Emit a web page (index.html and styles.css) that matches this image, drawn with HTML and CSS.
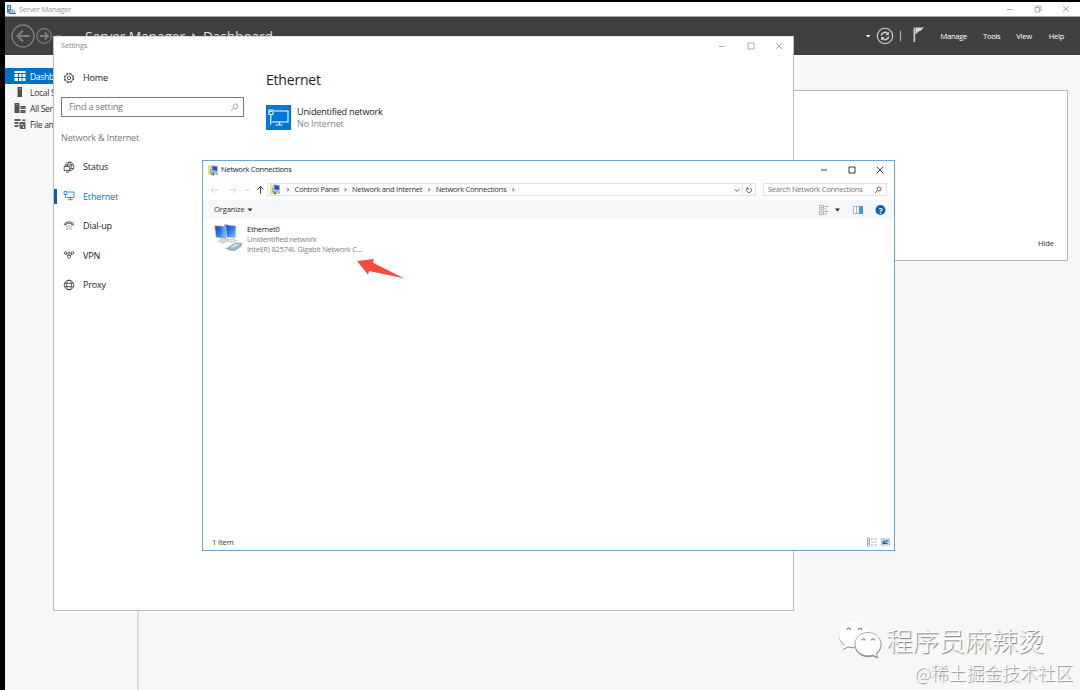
FILE: index.html
```html
<!DOCTYPE html>
<html lang="en">
<head>
    <meta charset="UTF-8">
    <meta name="viewport" content="width=device-width, initial-scale=1.0">
    <title>Server Manager</title>
    <link rel="stylesheet" href="styles.css">
</head>
<body>
    <div class="desktop">

        <!-- Server Manager -->
        <div class="server">
            <div class="server-title">
                <svg class="server-logo" viewBox="0 0 10 10">
                    <path fill="#2f86c5" d="M1 0h4v8H1z"/>
                    <path fill="#fff" d="M2 1.500h2v.7H2zM2 3h2v.7H2z"/>
                    <path fill="#7fa9c8" d="M3 5h2v3H3zM5.500 4H7v4H5.500zM7.500 5.500H9V8H7.500z"/>
                    <path fill="#2f6f9f" d="M3 8h7v1H3z"/>
                </svg>
                <span>Server Manager</span>
                <div class="win-buttons server-buttons">
                    <svg viewBox="0 0 8 8"><path d="M1 4.500h6"/></svg>
                    <svg viewBox="0 0 8 8"><path d="M1 2.500h4.500V7H1zM2.500 2.500V1H7v4.500H5.500"/></svg>
                    <svg viewBox="0 0 8 8"><path d="M1 1l6 6M7 1L1 7"/></svg>
                </div>
            </div>

            <div class="server-header">
                <svg class="nav-arrows" viewBox="0 0 52 24">
                    <g fill="none" stroke="#7c7c7c">
                        <circle cx="12" cy="12" r="11" stroke-width="1.300"/>
                        <path stroke-width="2.200" d="M18.500 12H6.500M12 6.500L6.500 12l5.500 5.500"/>
                        <circle cx="33" cy="12" r="7.300" stroke-width="1.200"/>
                        <path stroke-width="1.800" d="M29 12h8M33.700 8.500l3.500 3.500-3.500 3.500"/>
                    </g>
                    <path fill="#777" d="M45 11h5l-2.500 3z"/>
                </svg>
                <div class="breadcrumb">
                    <span>Server Manager</span>
                    <svg viewBox="0 0 5 8"><path fill="#ddd" d="M.5 0L4.500 4l-4 4z"/></svg>
                    <span>Dashboard</span>
                </div>
                <div class="server-menu">
                    <svg class="header-icons" viewBox="0 0 60 20">
                        <path fill="#fff" d="M0 9h4.400L2.200 11.600z"/>
                        <g fill="none" stroke="#cfcfcf">
                            <circle cx="19" cy="10" r="7.700" stroke-width="1.100"/>
                            <path stroke-width="1.500" d="M15.300 9.500a3.800 3.800 0 0 1 6.700-1.700M22.700 10.500a3.800 3.800 0 0 1-6.700 1.700"/>
                            <path stroke-width="1.200" d="M34.500 4.500v11" stroke="#aaa"/>
                        </g>
                        <path fill="#cfcfcf" d="M22.900 5.500v3.600h-3.600zM15.100 14.500v-3.600h3.600z"/>
                        <path fill="#c6c6c6" d="M47.500 1.500h1.700v14.500h-1.700z"/>
                        <path fill="#dadada" d="M49.500 1.500h8.500l-3.500 3.300-2 .7-3 3z"/>
                    </svg>
                    <span class="m-manage">Manage</span>
                    <span class="m-tools">Tools</span>
                    <span class="m-view">View</span>
                    <span class="m-help">Help</span>
                </div>
            </div>

            <div class="server-body">
                <div class="server-side">
                    <div class="side-item active">
                        <svg viewBox="0 0 12 12"><path fill="#fff" d="M.5 1h11v2H.5zM.5 4H4v3H.5zM5 4h2.500v3H5zM8.500 4h3v3h-3zM.5 8H4v3H.5zM5 8h2.500v3H5zM8.500 8h3v3h-3z"/></svg>
                        <span>Dashboard</span>
                    </div>
                    <div class="side-item">
                        <svg viewBox="0 0 12 12"><path fill="#505050" d="M3.500 1h4.500v10H3.500z"/><path fill="#aaa" d="M4.500 2.500h2.500v.8H4.500z"/></svg>
                        <span>Local Server</span>
                    </div>
                    <div class="side-item">
                        <svg viewBox="0 0 12 12"><path fill="#505050" d="M.5 1H5.500v10h-5zM6.500 4h5v3h-5zM6.500 8h5v3h-5z"/><path fill="#aaa" d="M1.500 2.500h3v.7h-3zM7.500 5h3v.6h-3zM7.500 9h3v.6h-3z"/></svg>
                        <span>All Servers</span>
                    </div>
                    <div class="side-item">
                        <svg viewBox="0 0 12 12"><path fill="#606060" d="M.5 1h6v2h-6zM.5 4h4v2h-4zM.5 7h4v2h-4zM5.500 4h6v7H6V9.500h-.5zM8 1.500h3.500V3H8z"/><path fill="#ddd" d="M7 6h2v1H7zM9 8h1v2H9z"/></svg>
                        <span>File and Storage</span>
                    </div>
                </div>
                <div class="server-main">
                    <div class="server-tile"><span>Hide</span></div>
                </div>
            </div>
        </div>

        <!-- Settings -->
        <div class="settings">
            <div class="settings-title">
                <span>Settings</span>
                <div class="win-buttons settings-buttons">
                    <svg viewBox="0 0 8 8"><path d="M1 4.500h6"/></svg>
                    <svg viewBox="0 0 8 8"><path d="M1 1h6v6H1z"/></svg>
                    <svg viewBox="0 0 8 8"><path d="M1 1l6 6M7 1L1 7"/></svg>
                </div>
            </div>
            <div class="settings-body">
                <div class="settings-nav">
                    <div class="nav-item home">
                        <svg viewBox="0 0 12 12"><circle cx="6" cy="6" r="4.700" stroke-width="1" stroke-dasharray="2.200 1.490"/><circle cx="6" cy="6" r="4" stroke-width=".6"/><circle cx="6" cy="6" r="1.700" stroke-width=".8"/></svg>
                        <span>Home</span>
                    </div>
                    <div class="search">
                        <span>Find a setting</span>
                        <svg viewBox="0 0 10 10"><circle cx="6" cy="3.700" r="2.700"/><path d="M4 5.700L1 9"/></svg>
                    </div>
                    <div class="nav-heading">Network &amp; Internet</div>
                    <div class="nav-item">
                        <svg viewBox="0 0 12 12"><circle cx="6.500" cy="5.500" r="4.400"/><path d="M2.500 4h8M6.500 1c-2 2-2 3-2 4M6.500 1c3 3 2 6 0 8.500M8 7.500h3"/><path fill="#fff" d="M1.200 5.500h5.500v4H1.200zM3 11.200h3"/></svg>
                        <span>Status</span>
                    </div>
                    <div class="nav-item active">
                        <svg viewBox="0 0 12 12"><path d="M5 2h6v5.500H3.500M7.500 7.500v2.200M5 9.700h5M1 1.500h3v2.800H1zM2.500 4.300v3.700"/></svg>
                        <span>Ethernet</span>
                    </div>
                    <div class="nav-item">
                        <svg viewBox="0 0 12 12"><path stroke-width=".8" d="M1.200 4.700C1.500 1 10.500 1 10.800 4.700L8.800 5V3.800c-1.700-.7-3.900-.7-5.600 0V5z"/><path stroke-dasharray="1 .7" stroke-width=".7" d="M4 6v4M6 5v5M8 6v4"/></svg>
                        <span>Dial-up</span>
                    </div>
                    <div class="nav-item">
                        <svg viewBox="0 0 12 12"><circle cx="2.500" cy="4" r="1.300"/><circle cx="6" cy="4.300" r="1"/><circle cx="9.500" cy="4" r="1.300"/><circle cx="6" cy="7.600" r="1.500"/><path d="M3 5.200l2 1.500M9 5.200L7 6.700"/></svg>
                        <span>VPN</span>
                    </div>
                    <div class="nav-item">
                        <svg viewBox="0 0 12 12"><circle cx="6" cy="6" r="4.800"/><ellipse cx="6" cy="6" rx="2.300" ry="4.800"/><path d="M1.700 4.300h8.600M1.700 7.700h8.600"/></svg>
                        <span>Proxy</span>
                    </div>
                </div>
                <div class="settings-main">
                    <h1>Ethernet</h1>
                    <div class="network">
                        <svg viewBox="0 0 25 25">
                            <path fill="#0078d7" d="M0 0h25v25H0z"/>
                            <path fill="none" stroke="#fff" stroke-width="1.100" d="M8 6h14v11H6M13.500 17v2.500M9.500 20h7M3 5h4v4.500H3zM4.800 9.500v10"/>
                            <path fill="#fff" d="M3.500 6h2.500v1H3.500z"/>
                        </svg>
                        <div>
                            <div class="network-name">Unidentified network</div>
                            <div class="network-state">No Internet</div>
                        </div>
                    </div>
                </div>
            </div>
        </div>

        <!-- Network Connections -->
        <div class="explorer">
            <div class="explorer-title">
                <svg class="net-icon" viewBox="0 0 11 11">
                    <path fill="#f0dc84" d="M0 .500h5v9.500H0z"/>
                    <path fill="#9ac6e6" stroke="#5f93bd" stroke-width=".6" d="M2.500 4.500h4v3.500h-4z"/>
                    <path fill="#2c52bb" stroke="#a9bcdb" stroke-width=".8" d="M4 .8l5.500.5V6.500L4 5.500z"/>
                    <path fill="#a4b2bd" d="M6 7l3-.5L10.500 9l-2 1.200z"/>
                    <path fill="#3f9b50" d="M3 9l2.500-1.500L7 9.500l-2 1.300z"/>
                </svg>
                <span>Network Connections</span>
                <div class="win-buttons explorer-buttons">
                    <svg viewBox="0 0 8 8"><path d="M1 4h6"/></svg>
                    <svg viewBox="0 0 8 8"><path d="M1 1h6v6H1z"/></svg>
                    <svg viewBox="0 0 8 8"><path d="M.7.700l6.600 6.600M7.300.7L.7 7.300"/></svg>
                </div>
            </div>

            <div class="address-row">
                <svg class="arrows" viewBox="0 0 56 10">
                    <g fill="none" stroke="#d2d2d2">
                        <path d="M8 5H1.500M4 2L1 5l3 3M19 5h6.500M23 2l3 3-3 3M35 4l2 2 2-2"/>
                        <path stroke="#444" d="M50.500 8.500v-7M47.500 4.500l3-3 3 3"/>
                    </g>
                </svg>
                <div class="address">
                    <svg class="net-icon" viewBox="0 0 11 11">
                        <path fill="#f0dc84" d="M0 .500h5v9.500H0z"/>
                        <path fill="#9ac6e6" stroke="#5f93bd" stroke-width=".6" d="M2.500 4.500h4v3.500h-4z"/>
                        <path fill="#2c52bb" stroke="#a9bcdb" stroke-width=".8" d="M4 .8l5.500.5V6.500L4 5.500z"/>
                        <path fill="#a4b2bd" d="M6 7l3-.5L10.500 9l-2 1.200z"/>
                        <path fill="#3f9b50" d="M3 9l2.500-1.500L7 9.500l-2 1.300z"/>
                    </svg>
                    <i>&#8250;</i>
                    <span>Control Panel</span>
                    <i>&#8250;</i>
                    <span>Network and Internet</span>
                    <i>&#8250;</i>
                    <span>Network Connections</span>
                    <i>&#8250;</i>
                    <svg class="chevron" viewBox="0 0 8 8"><path fill="none" stroke="#666" stroke-width="1" d="M1.500 3L4 5.500 6.500 3"/></svg>
                    <div class="refresh">
                        <svg viewBox="0 0 8 8"><path fill="none" stroke="#555" stroke-width=".9" d="M5.500 2A2.500 2.500 0 1 1 2.500 2M2.200.8v2h2"/></svg>
                    </div>
                </div>
                <div class="search-box">
                    <span>Search Network Connections</span>
                    <svg viewBox="0 0 8 8"><g fill="none" stroke="#555" stroke-width=".9"><circle cx="5" cy="3" r="2"/><path d="M3.500 4.500L1 7"/></g></svg>
                </div>
            </div>

            <div class="command-bar">
                <span>Organize</span>
                <svg class="caret" viewBox="0 0 6 4"><path fill="#333" d="M.5.500h5L3 3.500z"/></svg>
                <svg class="commands" viewBox="0 0 70 12">
                    <path fill="#fff" stroke="#a09ab8" stroke-width=".8" d="M1.500 1.500h4v3.700h-4zM1.500 6.800h4v3.700h-4z"/>
                    <path fill="none" stroke="#888" stroke-width=".8" d="M2.500 3.500h2M2.500 8.700h2M6.500 2.500h4M6.500 5h2M6.500 7.500H10M6.500 10h2"/>
                    <path fill="#222" d="M17 4.500h5l-2.500 3z"/>
                    <path fill="#fff" stroke="#93a5b2" stroke-width=".8" d="M35.400 2.500h9.200v7h-9.200zM38.500 2.500v7"/>
                    <path fill="#3c9be0" d="M41 2.200h4v7.600h-4z"/>
                    <circle cx="62.500" cy="6" r="5" fill="#0b63b3"/>
                </svg>
                <b class="help">?</b>
            </div>

            <div class="files">
                <svg class="adapter" viewBox="0 0 30 30">
                    <defs>
                        <linearGradient id="screen" x1="0" y1="0" x2="1" y2="1">
                            <stop offset="0" stop-color="#0f45c4"/>
                            <stop offset=".5" stop-color="#2a7ae4"/>
                            <stop offset="1" stop-color="#8fcbf8"/>
                        </linearGradient>
                    </defs>
                    <path fill="url(#screen)" stroke="#c3ced8" stroke-width=".8" d="M11.500 1.500l11.500 1.500-.5 12-10-1z"/>
                    <path fill="#d2d9df" stroke="#a9b5bf" stroke-width=".5" d="M5 18l6-2.500 6 1.500-7 3.500z"/>
                    <path fill="url(#screen)" stroke="#d0dae4" stroke-width=".8" d="M1.500 2.500l11 .8 1.500 13-11-2z"/>
                    <path fill="#7ec0f4" d="M8.500 3.500l3.500.3 1.400 11.700-3.900-.8z" opacity=".45"/>
                    <path fill="#e2e8ec" stroke="#9eabb5" stroke-width=".5" d="M14 17l5-1 5 1.500-6 2z"/>
                    <path fill="#9db9cc" stroke="#7391a6" stroke-width=".6" d="M15 24.500l7-4.500 6.500.3V23l-7 4.500-5.500-.5z"/>
                    <path fill="#dce8ef" d="M17.500 24l5-3 3.500.3-5 3z"/>
                    <path fill="none" stroke="#8797a3" d="M12.500 25l3.500 1"/>
                </svg>
                <div class="file-text">
                    <div class="file-name">Ethernet0</div>
                    <div class="file-net">Unidentified network</div>
                    <div class="file-dev">Intel(R) 82574L Gigabit Network C...</div>
                </div>
            </div>

            <div class="status-bar">
                <span>1 item</span>
                <svg viewBox="0 0 24 10">
                    <path fill="none" stroke="#999" stroke-width=".8" d="M1.500 1h2v8h-2zM1.500 3.600h2M1.500 6.300h2M5 2h2.300M5 5h2.300M5 8h2.300M8.500 2H11M8.500 5H11M8.500 8H11"/>
                    <path fill="#d8ecfa" stroke="#9daab4" stroke-width=".8" d="M15.400 1.900h8.200v6.200h-8.200z"/>
                    <path fill="#5b9ed6" d="M17 3h5.500v2.500H17z"/>
                    <path fill="#33566b" d="M16.500 7V4.500l2.500 1 3 1V7z"/>
                </svg>
            </div>
        </div>

        <svg class="pointer" viewBox="0 0 50 22">
            <path fill="#f24d40" d="M1 4L18 2l-1 3.800L48.500 21.500 13 14l-1 3.700z"/>
        </svg>

        <div class="watermark">
            <div class="mark-line">
                <svg viewBox="0 0 44 38">
                    <path d="M16 1.500C7.500 1.500 1 7 1 14c0 4 2 7.200 5.300 9.500L5 28l5.300-2.500c2 .6 4 .9 6 .8C17 18 24 12 31 12 29.500 6 23.500 1.500 16 1.500z"/>
                    <path class="bubble-front" d="M30 11.500c-7.300 0-13 5-13 11.500s5.700 11.700 13 11.700c2 0 3.500-.3 5-.8l4.500 2.300-1.200-4C41.200 30 43 26.800 43 23c0-6.500-5.700-11.500-13-11.500z"/>
                    <path class="eyes" d="M9 9c0-2.500 3.500-2.500 3.500 0M20.500 9c0-2.500 3.500-2.500 3.500 0M24 19.500c0-2.300 3-2.300 3 0M33.500 19.500c0-2.300 3-2.300 3 0"/>
                </svg>
                <span lang="zh">程序员麻辣烫</span>
            </div>
            <div class="mark-site" lang="zh">@稀土掘金技术社区</div>
        </div>
    </div>
</body>
</html>
```

FILE: styles.css
```css
* {
    margin: 0;
    padding: 0;
    box-sizing: border-box;
}

body {
    background: #000;
    overflow: hidden;
    font-family: "Open Sans", "Noto Sans", "Noto Sans CJK SC", sans-serif;
    font-size: 7.6px;
    line-height: 1.3;
    letter-spacing: -0.3px;
    color: #333;
    white-space: nowrap;
}

svg {
    display: block;
    flex: none;
}

i {
    font-style: normal;
}

.desktop {
    position: relative;
    width: 1080px;
    height: 690px;
    padding: 2px 0 0 5px;
    overflow: hidden;
}

/* window buttons */
.win-buttons {
    display: flex;
    align-items: center;
    margin-left: auto;
}

.win-buttons svg {
    width: 8px;
    height: 8px;
    fill: none;
    stroke: #999;
    stroke-width: 0.8;
}

/* server manager */
.server {
    display: flex;
    flex-direction: column;
    height: 688px;
    background: #f7f7f7;
}

.server-title {
    display: flex;
    align-items: center;
    height: 15px;
    padding: 1px 0 0 1px;
    background: #fff;
    border-bottom: 1px solid #aaa;
    color: #999;
}

.server-logo {
    width: 10px;
    height: 10px;
    margin-right: 3px;
}

.server-buttons {
    gap: 20px;
    padding: 0 10px 1px 0;
}

.server-header {
    display: flex;
    align-items: center;
    height: 38px;
    background: #404040;
    color: #fff;
}

.nav-arrows {
    width: 52px;
    height: 24px;
    margin-left: 6px;
}

.breadcrumb {
    display: flex;
    align-items: center;
    margin-left: 22px;
    padding-top: 2px;
    font-size: 14px;
    letter-spacing: -0.25px;
    color: #ddd;
}

.breadcrumb svg {
    width: 5px;
    height: 8px;
    margin: 0 6px 0 7px;
}

.server-menu {
    display: flex;
    align-items: center;
    margin-left: auto;
    padding-right: 16px;
}

.header-icons {
    width: 60px;
    height: 20px;
    margin-right: 14px;
}

.server-menu span {
    padding-top: 1px;
}

.m-manage,
.m-tools,
.m-view {
    margin-right: 16px;
}

.m-help {
    margin-left: 1px;
}

.server-body {
    display: flex;
    flex: 1;
}

.server-side {
    width: 134px;
    padding-top: 13px;
    border-right: 2px solid #dcdcdc;
}

.side-item {
    display: flex;
    align-items: center;
    gap: 4px;
    height: 16.1px;
    padding: 1px 0 0 9px;
    font-size: 8.5px;
}

.side-item svg {
    width: 12px;
    height: 12px;
    margin-bottom: 1px;
}

.side-item.active {
    background: #0072c6;
    color: #fff;
}

.server-main {
    flex: 1;
    padding: 35px 12px 0 12px;
}

.server-tile {
    display: flex;
    justify-content: flex-end;
    align-items: flex-end;
    height: 171px;
    padding: 0 13px 11px 0;
    background: #fff;
    border: 1px solid #b5b5b5;
    letter-spacing: -0.1px;
}

/* settings */
.settings {
    position: absolute;
    left: 53px;
    top: 36px;
    width: 741px;
    height: 575px;
    background: #fff;
    border: 1px solid #bdbdbd;
    border-top-color: #ddd;
    letter-spacing: -0.2px;
}

.settings-title {
    display: flex;
    align-items: center;
    height: 18px;
    padding-left: 7px;
    font-size: 7.5px;
    color: #8a8a8a;
}

.settings-buttons {
    gap: 20.5px;
    padding-right: 10px;
}

.settings-body {
    display: flex;
}

.settings-nav {
    width: 212px;
    padding-top: 8px;
    font-size: 9.1px;
}

.nav-item {
    display: flex;
    align-items: center;
    gap: 8px;
    height: 29.5px;
    padding-left: 9px;
    color: #222;
}

.nav-item.home {
    height: 29px;
}

.nav-item span {
    padding-top: 1px;
}

.nav-item svg {
    width: 12px;
    height: 12px;
    fill: none;
    stroke: #333;
    stroke-width: 0.8;
}

.nav-item.active {
    position: relative;
    color: #0078d7;
}

.nav-item.active::before {
    content: "";
    position: absolute;
    left: 0;
    top: 7px;
    width: 3px;
    height: 15px;
    background: #0067b8;
}

.nav-item.active svg {
    stroke: #0078d7;
}

.search {
    display: flex;
    align-items: center;
    justify-content: space-between;
    width: 183px;
    height: 20px;
    margin: 5px 0 0 7px;
    padding: 0 4px 0 7px;
    border: 1.5px solid #7a7a7a;
    color: #777;
}

.search svg {
    width: 9px;
    height: 9px;
    fill: none;
    stroke: #888;
    stroke-width: 0.8;
}

.nav-heading {
    height: 35px;
    padding: 15px 0 0 7px;
    color: #777;
}

.settings-main h1 {
    margin-top: 15px;
    font-size: 14px;
    font-weight: 400;
    line-height: 20px;
    color: #222;
}

.network {
    display: flex;
    align-items: center;
    gap: 6px;
    margin-top: 15px;
    line-height: 12px;
}

.network svg {
    width: 25px;
    height: 25px;
}

.network-name {
    font-size: 9.1px;
    color: #222;
}

.network-state {
    font-size: 9.1px;
    color: #888;
}

/* network connections */
.explorer {
    position: absolute;
    left: 202px;
    top: 160px;
    display: flex;
    flex-direction: column;
    width: 693px;
    height: 391px;
    background: #fff;
    border: 1px solid #68a7d8;
}

.explorer-title {
    display: flex;
    align-items: center;
    height: 18px;
    padding-left: 5px;
    color: #222;
}

.net-icon {
    width: 11px;
    height: 11px;
}

.explorer-title .net-icon {
    margin-right: 2px;
}

.explorer-buttons {
    gap: 20px;
    padding-right: 10px;
}

.explorer-buttons svg {
    stroke: #222;
    stroke-width: 0.9;
}

.address-row {
    display: flex;
    align-items: center;
    height: 21px;
    padding-left: 7px;
    color: #333;
}

.arrows {
    width: 56px;
    height: 10px;
}

.address {
    display: flex;
    align-items: center;
    width: 489px;
    height: 13px;
    margin-left: 1px;
    padding-left: 2px;
    border: 1px solid #e2e2e2;
}

.address i {
    width: 13.5px;
    text-align: center;
    font-size: 9px;
    line-height: 9px;
    padding-bottom: 2px;
}

.chevron {
    width: 8px;
    height: 8px;
    margin-left: auto;
}

.refresh {
    display: flex;
    align-items: center;
    justify-content: center;
    width: 13px;
    height: 11px;
    margin-left: 1px;
    border-left: 1px solid #e2e2e2;
}

.refresh svg {
    width: 8px;
    height: 8px;
}

.search-box {
    display: flex;
    align-items: center;
    justify-content: space-between;
    width: 124px;
    height: 13px;
    margin-left: 7px;
    padding: 0 4px;
    border: 1px solid #e2e2e2;
    color: #777;
}

.search-box svg {
    width: 8px;
    height: 8px;
}

.command-bar {
    display: flex;
    align-items: center;
    position: relative;
    height: 19px;
    padding: 1px 0 0 11px;
    background: #f5f7f9;
    letter-spacing: -0.15px;
}

.caret {
    width: 6px;
    height: 4px;
    margin-left: 2px;
}

.commands {
    width: 70px;
    height: 12px;
    margin-left: auto;
    margin-right: 6px;
}

.help {
    position: absolute;
    right: 8.500px;
    top: 5px;
    width: 10px;
    font-size: 8px;
    line-height: 11px;
    text-align: center;
    color: #fff;
}

.files {
    display: flex;
    flex: 1;
    padding: 4px 0 0 10px;
}

.adapter {
    width: 30px;
    height: 30px;
}

.file-text {
    margin: 1px 0 0 4px;
    font-size: 7.5px;
    line-height: 10px;
    letter-spacing: -0.22px;
    color: #808080;
}

.file-name {
    color: #222;
}

.status-bar {
    display: flex;
    align-items: center;
    justify-content: space-between;
    height: 16px;
    padding: 0 4px 0 9px;
    letter-spacing: -0.1px;
}

.status-bar span {
    padding-top: 2px;
}

.status-bar svg {
    width: 24px;
    height: 10px;
}

.pointer {
    position: absolute;
    left: 356px;
    top: 257px;
    width: 50px;
    height: 22px;
}

/* watermark */
.watermark {
    position: absolute;
    right: 7px;
    top: 620px;
    font-family: "Noto Sans CJK SC", sans-serif;
    letter-spacing: 0;
    color: #fff;
    text-shadow: 1px 1px 1px #777;
}

.mark-line {
    display: flex;
    align-items: center;
    height: 40px;
    padding-right: 29px;
    font-size: 26.3px;
    font-weight: 300;
}

.mark-line svg {
    width: 44px;
    height: 38px;
    margin-right: 4px;
    fill: #fff;
    filter: drop-shadow(0.5px 1px 0.5px #888);
}

.bubble-front {
    stroke: #999;
    stroke-width: 0.8;
}

.eyes {
    fill: none;
    stroke: #888;
    stroke-width: 1.2;
}

.mark-site {
    font-size: 17.8px;
    font-weight: 300;
    line-height: 24px;
    text-align: right;
}
```
